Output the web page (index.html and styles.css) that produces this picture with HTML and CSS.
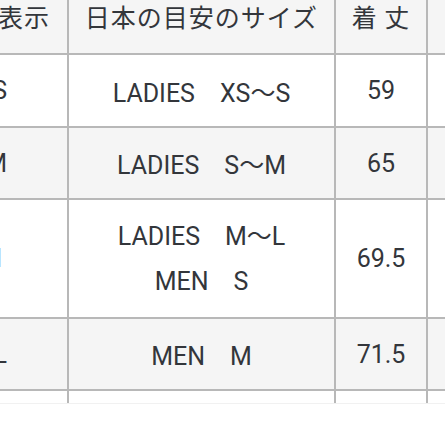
FILE: index.html
```html
<!DOCTYPE html>
<html lang="ja">
<head>
<meta charset="utf-8">
<link rel="stylesheet" href="styles.css">
</head>
<body>
<div class="frame">
  <table class="size-table">
    <colgroup>
      <col class="c1"><col class="c2"><col class="c3"><col class="c4">
    </colgroup>
    <thead>
      <tr class="head">
        <th class="col-label">表示</th>
        <th>日本の目安のサイズ</th>
        <th>着 丈</th>
        <th></th>
      </tr>
    </thead>
    <tbody>
      <tr class="row">
        <td class="col-label">S</td>
        <td>LADIES　XS〜S</td>
        <td>59</td>
        <td></td>
      </tr>
      <tr class="row alt">
        <td class="col-label">M</td>
        <td>LADIES　S〜M</td>
        <td>65</td>
        <td></td>
      </tr>
      <tr class="row tall">
        <td class="col-label shift">M</td>
        <td><div class="line">LADIES　M〜L</div><div class="line">MEN　S</div></td>
        <td>69.5</td>
        <td></td>
      </tr>
      <tr class="row alt">
        <td class="col-label">L</td>
        <td>MEN　M</td>
        <td>71.5</td>
        <td></td>
      </tr>
      <tr class="row">
        <td class="col-label">XL</td>
        <td>MEN　L</td>
        <td>74</td>
        <td></td>
      </tr>
    </tbody>
  </table>
</div>
</body>
</html>
```

FILE: styles.css
```css
html, body {
  margin: 0;
  padding: 0;
  background: #ffffff;
}

.frame {
  width: 445px;
  height: 403px;
  overflow: hidden;
  border-bottom: 1px solid #f1f1f1;
}

.size-table {
  border-collapse: collapse;
  table-layout: fixed;
  width: 580px;
  margin-top: -25px;
  margin-left: -54px;
  font-family: "Roboto", "Noto Sans CJK JP", sans-serif;
  font-size: 25px;
  color: #33363b;
}

.c1 { width: 121px; }
.c2 { width: 267px; }
.c3 { width: 92px; }
.c4 { width: 100px; }

.size-table th,
.size-table td {
  border: 2px solid #b8b8b8;
  text-align: center;
  vertical-align: middle;
  padding: 0;
  white-space: nowrap;
}

.head th {
  height: 74px;
  font-weight: normal;
  background: #f5f5f5;
  font-family: "Noto Sans CJK JP", sans-serif;
  font-size: 25px;
  line-height: 28px;
  letter-spacing: 1px;
  padding-top: 2px;
}

.row td {
  height: 71px;
  background: #ffffff;
}

.row.alt td {
  background: #f5f5f5;
  height: 70px;
}

.row.tall td {
  height: 117px;
}

.size-table .col-label {
  text-align: right;
  padding-right: 60px;
}

.size-table th.col-label {
  padding-right: 17px;
}

.size-table .col-label.shift {
  padding-right: 65px;
}

.line {
  line-height: 45px;
}
```
